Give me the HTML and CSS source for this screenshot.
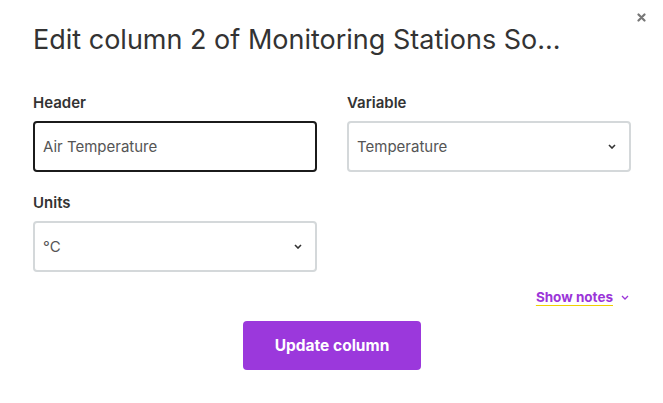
FILE: index.html
```html
<!DOCTYPE html>
<html>
<head>
<meta charset="utf-8">
<link rel="stylesheet" href="styles.css">
</head>
<body>
<div class="modal">
  <button class="close" aria-label="Close">
    <svg width="9" height="9" viewBox="0 0 9 9"><path d="M1.5 1.5L7.5 7.5M7.5 1.5L1.5 7.5" stroke="#777" stroke-width="2.2" stroke-linecap="round"/></svg>
  </button>
  <h1 class="title">Edit column 2 of Monitoring Stations So...</h1>
  <div class="grid">
    <div class="field">
      <label class="label">Header</label>
      <div class="input active">Air Temperature</div>
    </div>
    <div class="field">
      <label class="label">Variable</label>
      <div class="input select">Temperature<span class="chev"><svg width="8" height="5" viewBox="0 0 8 5"><path d="M1 1L4 4L7 1" stroke="#333" stroke-width="1.6" fill="none"/></svg></span></div>
    </div>
    <div class="field">
      <label class="label">Units</label>
      <div class="input select">°C<span class="chev"><svg width="8" height="5" viewBox="0 0 8 5"><path d="M1 1L4 4L7 1" stroke="#333" stroke-width="1.6" fill="none"/></svg></span></div>
    </div>
  </div>
  <div class="notes-row">
    <a class="notes">Show notes</a>
    <svg class="notes-chev" width="8" height="5" viewBox="0 0 8 5"><path d="M1 1L4 4L7 1" stroke="#9b35d8" stroke-width="1.3" fill="none"/></svg>
  </div>
  <div class="actions">
    <button class="btn">Update column</button>
  </div>
</div>
</body>
</html>
```
FILE: styles.css
```css
html, body {
  margin: 0;
  padding: 0;
  background: #fff;
}
body {
  font-family: Inter, "Noto Sans", sans-serif;
  color: #333;
}
.modal {
  position: relative;
  width: 663px;
  height: 403px;
  box-sizing: border-box;
  padding: 22px 32px 0 33px;
}
.close {
  position: absolute;
  top: 13px;
  right: 17px;
  border: 0;
  background: none;
  padding: 0;
  width: 9px;
  height: 9px;
  display: flex;
}
.title {
  margin: 0;
  font-size: 27px;
  font-weight: 400;
  line-height: 36px;
  color: #333;
  letter-spacing: 0;
}
.grid {
  margin-top: 35px;
  display: grid;
  grid-template-columns: 284px 284px;
  column-gap: 30px;
  row-gap: 21px;
}
.field {
  display: flex;
  flex-direction: column;
}
.label {
  font-size: 15px;
  font-weight: 600;
  line-height: 18px;
  color: #333;
  margin-bottom: 9px;
  padding-top: 1px;
}
.input {
  box-sizing: border-box;
  height: 51px;
  border: 2px solid #d4d8da;
  border-radius: 4px;
  padding: 0 8px;
  display: flex;
  align-items: center;
  font-size: 15px;
  color: #555;
}
.input.active {
  border-color: #1b1b1b;
}
.select {
  justify-content: space-between;
  padding-right: 13px;
}
.chev {
  display: flex;
}
.notes-row {
  margin-top: 17px;
  display: flex;
  justify-content: flex-end;
  align-items: center;
  gap: 8px;
  padding-right: 2px;
}
.notes {
  font-size: 13.5px;
  font-weight: 700;
  color: #9b35d8;
  text-decoration: underline;
  text-decoration-color: #f0d000;
  text-underline-offset: 3px;
  text-decoration-thickness: 1px;
  line-height: 16px;
}
.actions {
  margin-top: 16px;
  display: flex;
  justify-content: center;
}
.btn {
  width: 178px;
  height: 49px;
  border: 0;
  border-radius: 4px;
  background: #9b38dc;
  color: #fff;
  font-family: Inter, "Noto Sans", sans-serif;
  font-size: 15.5px;
  font-weight: 700;
}
```
